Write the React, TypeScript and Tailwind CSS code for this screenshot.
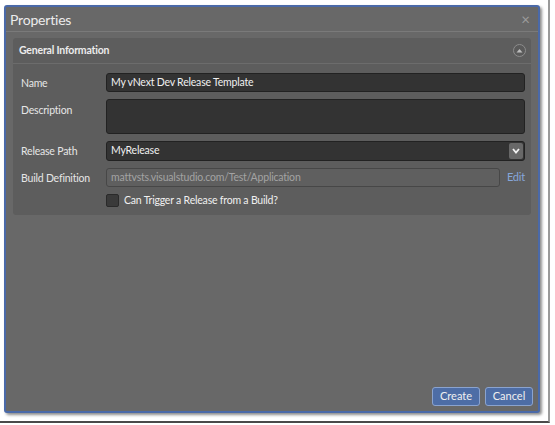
import React from "react";

const font = { fontFamily: 'Lato, "Noto Sans", "Liberation Sans", sans-serif' };

function Row({
    label,
    top = false,
    children,
}: {
    label: string;
    top?: boolean;
    children: React.ReactNode;
}) {
    return (
        <div className={`flex ${top ? "items-start" : "items-center"}`}>
            <div className={`w-[85px] shrink-0 text-[10.5px] leading-[14px] tracking-[-0.2px] text-[#e6e6e6] ${top ? "pt-[4px]" : ""}`}>
                {label}
            </div>
            <div className="flex flex-1 items-center">{children}</div>
        </div>
    );
}

export default function App() {
    return (
        <div className="h-[425px] w-[555px] overflow-hidden bg-white" style={font}>
            <div className="h-[423px] w-[550px] border-r-2 border-b-2 border-r-[#9a9a9a] border-b-[#4a4a4a] pt-[5px] pl-[4px]">
                <div className="flex h-[408px] w-[536px] flex-col rounded-[3px] border-2 border-[#4a69a8] bg-[#686868] shadow-[2px_2px_3px_rgba(0,0,0,0.45)]">
                    {/* Title bar */}
                    <div className="flex h-[25px] items-center justify-between border-b border-[#7a7a7a] pl-[4px] pr-[8px]">
                        <span className="text-[14px] tracking-[-0.2px] text-[#ececec]">Properties</span>
                        <span className="text-[15px] leading-none text-[#9c9c9c]">×</span>
                    </div>

                    {/* General Information panel */}
                    <div className="mx-[7px] mt-[6px] rounded-[3px] bg-[#5d5d5d] text-[10.5px] tracking-[-0.2px]">
                        <div className="flex h-[26px] items-center justify-between border-b border-[#6c6c6c] pl-[6px] pr-[5px]">
                            <span className="font-bold text-[#ececec]">General Information</span>
                            <span className="flex h-[13px] w-[13px] items-center justify-center rounded-full border border-[#8c8c8c] bg-[#5a5a5a]">
                                <svg width="7" height="5" viewBox="0 0 7 5">
                                    <path d="M0.5 4.5 L3.5 1 L6.5 4.5 Z" fill="#bdbdbd" />
                                </svg>
                            </span>
                        </div>

                        <div className="flex flex-col gap-[7px] pt-[9px] pr-[6px] pb-[8px] pl-[8px]">
                            <Row label="Name">
                                <div className="flex h-[19px] flex-1 items-center rounded-[3px] border border-[#222] bg-[#333] px-[4px] text-[#f0f0f0]">
                                    My vNext Dev Release Template
                                </div>
                            </Row>
                            <Row label="Description" top>
                                <div className="h-[35px] flex-1 rounded-[3px] border border-[#222] bg-[#333]" />
                            </Row>
                            <Row label="Release Path">
                                <div className="flex h-[20px] flex-1 items-center justify-between rounded-[3px] border border-[#222] bg-[#333] pl-[4px] pr-[1px] text-[#f0f0f0]">
                                    <span>MyRelease</span>
                                    <span className="flex h-[16px] w-[14px] items-center justify-center rounded-[2px] bg-[#686868]">
                                        <svg width="8" height="6" viewBox="0 0 8 6">
                                            <path d="M1 1 L4 4.5 L7 1" stroke="#f2f2f2" strokeWidth="1.8" fill="none" />
                                        </svg>
                                    </span>
                                </div>
                            </Row>
                            <Row label="Build Definition">
                                <div className="flex h-[19px] flex-1 items-center rounded-[3px] border border-[#474747] bg-[#5f5f5f] px-[4px] text-[#a3a3a3]">
                                    mattvsts.visualstudio.com/Test/Application
                                </div>
                                <span className="w-[25px] text-right text-[11px] text-[#86a6da]">Edit</span>
                            </Row>
                            <div className="flex h-[13px] items-center pl-[85px]">
                                <span className="h-[13px] w-[13px] rounded-[2px] border border-[#2a2a2a] bg-[#3a3a3a]" />
                                <span className="ml-[5px] leading-[13px] text-[#f0f0f0]">
                                    Can Trigger a Release from a Build?
                                </span>
                            </div>
                        </div>
                    </div>

                    {/* Footer buttons */}
                    <div className="mt-auto flex justify-end gap-[5px] pr-[5px] pb-[5px]">
                        <button className="h-[19px] w-[48px] rounded-[3px] border border-[#8aa3cf] bg-[#4d6da6] text-[11px] text-[#f0f0f0]">
                            Create
                        </button>
                        <button className="h-[19px] w-[48px] rounded-[3px] border border-[#8aa3cf] bg-[#4d6da6] text-[11px] text-[#f0f0f0]">
                            Cancel
                        </button>
                    </div>
                </div>
            </div>
        </div>
    );
}
